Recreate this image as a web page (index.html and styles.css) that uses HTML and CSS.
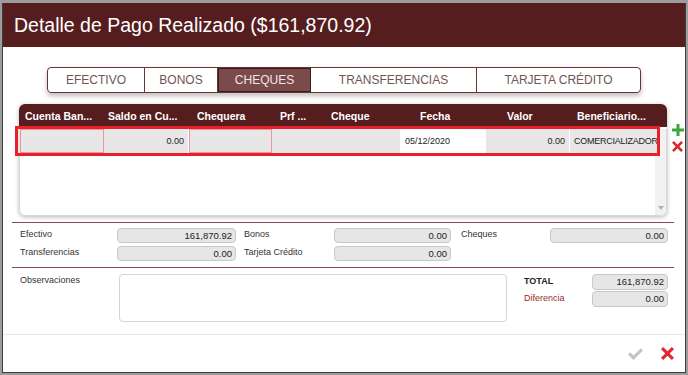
FILE: index.html
```html
<!DOCTYPE html>
<html lang="es">
<head>
    <meta charset="UTF-8">
    <title>Detalle de Pago Realizado</title>
    <link rel="stylesheet" href="styles.css">
</head>
<body>
    <div class="backdrop">
        <div class="modal">
            <header class="modal-head">
                <h1>Detalle de Pago Realizado ($161,870.92)</h1>
            </header>

            <div class="modal-body">
                <nav class="tabs">
                    <span class="tab t-efectivo">EFECTIVO</span>
                    <span class="tab t-bonos">BONOS</span>
                    <span class="tab t-cheques active">CHEQUES</span>
                    <span class="tab t-transf">TRANSFERENCIAS</span>
                    <span class="tab t-tarjeta">TARJETA CRÉDITO</span>
                </nav>

                <div class="grid-wrap">
                    <div class="grid">
                        <div class="grid-head">
                            <span class="c1">Cuenta Ban...</span>
                            <span class="c2">Saldo en Cu...</span>
                            <span class="c3">Chequera</span>
                            <span class="c4">Prf ...</span>
                            <span class="c5">Cheque</span>
                            <span class="c6">Fecha</span>
                            <span class="c7">Valor</span>
                            <span class="c8">Beneficiario...</span>
                        </div>
                        <div class="grid-body">
                            <div class="row selected">
                                <span class="cell c1 marked"></span>
                                <span class="cell c2 num">0.00</span>
                                <span class="cell c3 marked"></span>
                                <span class="cell c4"></span>
                                <span class="cell c5"></span>
                                <span class="cell c6 white">05/12/2020</span>
                                <span class="cell c7 num">0.00</span>
                                <span class="cell c8">COMERCIALIZADOR</span>
                            </div>
                            <div class="scrollbar"><span class="arrow"></span></div>
                        </div>
                    </div>
                    <div class="row-actions">
                        <svg width="12" height="12" viewBox="0 0 12 12"><path d="M4.5 0h3v4.5H12v3H7.5V12h-3V7.5H0v-3h4.5z" fill="#3aa63a"/></svg>
                        <svg width="11" height="11" viewBox="0 0 12 12"><path d="M2 0l4 4 4-4 2 2-4 4 4 4-2 2-4-4-4 4-2-2 4-4-4-4z" fill="#d9262b"/></svg>
                    </div>
                </div>

                <div class="totals">
                    <div class="field"><label>Efectivo</label><span class="box">161,870.92</span></div>
                    <div class="field"><label>Bonos</label><span class="box">0.00</span></div>
                    <div class="field"><label>Cheques</label><span class="box">0.00</span></div>
                    <div class="field"><label>Transferencias</label><span class="box">0.00</span></div>
                    <div class="field"><label>Tarjeta Crédito</label><span class="box">0.00</span></div>
                </div>

                <div class="bottom">
                    <label class="obs-label">Observaciones</label>
                    <div class="obs"></div>
                    <div class="summary">
                        <div class="field"><label class="strong">TOTAL</label><span class="box">161,870.92</span></div>
                        <div class="field"><label class="diff">Diferencia</label><span class="box">0.00</span></div>
                    </div>
                </div>
            </div>

            <footer class="modal-foot">
                <svg width="15" height="12" viewBox="0 0 15 12"><path d="M0 6.5l2.2-2.2 3.3 3.3L12.8 0.3 15 2.5 5.5 12z" fill="#c4c4c4"/></svg>
                <svg width="13" height="13" viewBox="0 0 12 12"><path d="M2 0l4 4 4-4 2 2-4 4 4 4-2 2-4-4-4 4-2-2 4-4-4-4z" fill="#e3262d"/></svg>
            </footer>
        </div>
    </div>
</body>
</html>
```

FILE: styles.css
```css
body {
    margin: 0;
    font-family: "Liberation Sans", Arial, sans-serif;
    background: #9c9c9c;
}
.backdrop {
    width: 688px;
    height: 375px;
    padding: 3px 2px 2px 2px;
    box-sizing: border-box;
}
.modal {
    height: 370px;
    background: white;
    border: 1px solid #3d3d3d;
    border-top: none;
    box-sizing: border-box;
    display: flex;
    flex-direction: column;
}
.modal-head {
    background: #561d1f;
    height: 44px;
    display: flex;
    align-items: center;
    padding-left: 11px;
}
.modal-head h1 {
    margin: 0;
    color: white;
    font-weight: normal;
    font-size: 19.5px;
}
.modal-body {
    flex: 1;
    padding: 20px 10px 0 9px;
}

/* Tabs */
.tabs {
    display: flex;
    width: 594px;
    height: 26px;
    margin: 0 0 11px 35px;
    border: 1px solid #6a3435;
    border-radius: 4px;
    box-sizing: border-box;
    box-shadow: 0 3px 5px rgba(0, 0, 0, 0.25);
    overflow: hidden;
}
.tab {
    display: flex;
    align-items: center;
    justify-content: center;
    font-size: 12px;
    color: #6e5656;
    border-right: 1px solid #6a3435;
    box-sizing: border-box;
}
.tab:last-child { border-right: none; }
.t-efectivo { width: 97px; }
.t-bonos { width: 73px; }
.t-cheques { width: 93px; }
.t-transf { width: 166px; }
.t-tarjeta { flex: 1; }
.tab.active {
    background: #7b4a4b;
    color: #f0e6e6;
    border: 1px solid #3a1a1b;
}

/* Grid */
.grid-wrap {
    display: flex;
    gap: 5px;
}
.grid {
    width: 648px;
    margin-left: 7px;
    border-radius: 6px;
    box-shadow: 0 1px 4px rgba(0, 0, 0, 0.3);
}
.grid-head {
    display: flex;
    height: 23px;
    align-items: center;
    padding-left: 1px;
    background: #561d1f;
    border-radius: 6px 6px 0 0;
    color: white;
    font-size: 10.5px;
    font-weight: bold;
}
.grid-head span {
    box-sizing: border-box;
    white-space: nowrap;
}
.c1 { width: 84px; }
.c2 { width: 85px; }
.c3 { width: 83px; }
.c4 { width: 51px; }
.c5 { width: 78px; }
.c6 { width: 85px; }
.c7 { width: 84px; }
.c8 { flex: 1; overflow: hidden; white-space: nowrap; }
.grid-head .c1 { padding-left: 5px; }
.grid-head .c2 { padding-left: 4px; }
.grid-head .c3,
.grid-head .c4,
.grid-head .c5 { padding-left: 8px; }
.grid-head .c6 { padding-left: 19px; }
.grid-head .c7 { padding-left: 21px; }
.grid-head .c8 { padding-left: 7px; }
.grid-body {
    position: relative;
    height: 86px;
    border: 1px solid #d8d8d8;
    border-top: none;
    border-radius: 0 0 6px 6px;
    background: white;
}
.row {
    display: flex;
    height: 24px;
    margin: 2px 9px 0 0;
    background: #e8e6e6;
}
.row.selected {
    position: relative;
    z-index: 1;
    outline: 3px solid #e8202a;
    margin-left: -2px;
    padding-left: 2px;
}
.cell {
    display: flex;
    align-items: center;
    font-size: 9px;
    color: #222;
    padding: 0 4px;
    box-sizing: border-box;
    border-right: 1px solid #fff;
}
.cell.num { justify-content: flex-end; }
.cell.white { background: white; }
.cell.marked { border: 1px solid #e49a9c; }
.cell.c4 { border-right: none; }
.cell.c8 {
    padding: 0 1px 0 4px;
    border-right: none;
    letter-spacing: -0.25px;
}
.scrollbar {
    position: absolute;
    right: 0;
    top: 0;
    bottom: 0;
    width: 11px;
    background: #f2f2f2;
    border-radius: 0 0 6px 0;
}
.scrollbar .arrow {
    position: absolute;
    bottom: 5px;
    left: 3px;
    border-left: 3px solid transparent;
    border-right: 3px solid transparent;
    border-top: 4px solid #b0b0b0;
}
.row-actions {
    display: flex;
    flex-direction: column;
    gap: 5px;
    padding-top: 20px;
}

/* Totals */
.totals {
    display: grid;
    grid-template-columns: 97px 127px 90px 127px 89px 118px;
    row-gap: 3px;
    margin-top: 6px;
    padding: 5px 0 6px 8px;
    border-top: 1px solid #8a4a4b;
    border-bottom: 1px solid #8a4a4b;
    width: 662px;
    box-sizing: border-box;
}
.field {
    display: contents;
}
.field label {
    font-size: 9px;
    color: #333;
    padding-top: 1px;
}
.box {
    height: 13px;
    background: #e6e6e6;
    border: 1px solid #c8c8c8;
    border-radius: 4px;
    font-size: 9.5px;
    color: #222;
    text-align: right;
    padding-right: 3px;
    line-height: 13px;
}
.totals .box { margin-right: 8px; }
.totals .field:nth-child(2) .box,
.totals .field:nth-child(5) .box { margin-right: 10px; }
.totals .field:nth-child(3) .box { margin-right: 0; }

/* Observaciones */
.bottom {
    display: flex;
    padding: 6px 0 0 8px;
    height: 60px;
    box-sizing: border-box;
}
.obs-label {
    font-size: 9px;
    color: #333;
    width: 99px;
    padding-top: 1px;
}
.obs {
    width: 388px;
    height: 48px;
    border: 1px solid #d4d4d4;
    border-radius: 4px;
    box-sizing: border-box;
}
.summary {
    display: grid;
    grid-template-columns: 68px 76px;
    row-gap: 1px;
    margin-left: 17px;
    height: 33px;
}
.summary .box {
    height: 14px;
    line-height: 14px;
}
.summary label { padding-top: 2px; }
.summary .strong {
    font-weight: bold;
    color: #222;
}
.summary .diff { color: #9b2a2b; }

/* Footer */
.modal-foot {
    height: 37px;
    border-top: 1px solid #e8e8e8;
    display: flex;
    align-items: center;
    justify-content: flex-end;
    gap: 18px;
    padding-right: 11px;
}
```
